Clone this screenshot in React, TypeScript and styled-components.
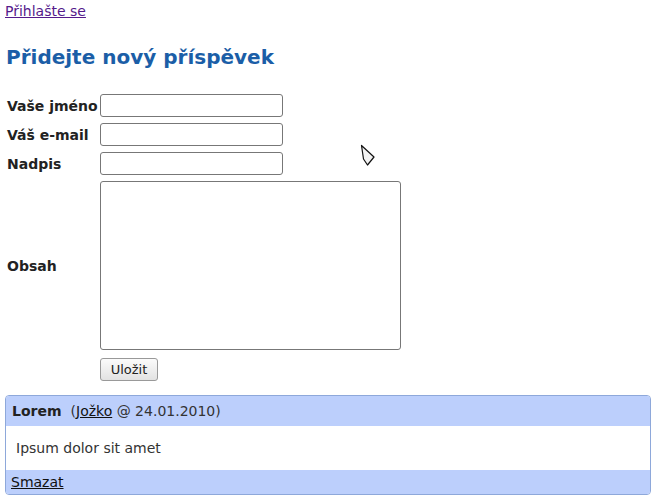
import React from "react";
import styled, { createGlobalStyle } from "styled-components";

const GlobalStyle = createGlobalStyle`
  body {
    margin: 0;
    padding: 0 5px;
    background: #ffffff;
    font-family: "DejaVu Sans", sans-serif;
    font-size: 14px;
    color: #222222;
  }
`;

const LoginLink = styled.a`
  display: inline-block;
  margin-top: 3px;
  color: #551a8b;
  font-size: 14px;
  text-decoration: underline;
`;

const Heading = styled.h1`
  margin: 26px 0 21px 1px;
  font-size: 20px;
  line-height: 24px;
  font-weight: bold;
  color: #1b5ea7;
`;

const FormTable = styled.table`
  border-collapse: separate;
  border-spacing: 1px 2px;
`;

const Label = styled.th`
  text-align: left;
  font-size: 14px;
  font-weight: bold;
  padding: 2px 0 2px 1px;
  white-space: nowrap;
`;

const Cell = styled.td`
  padding: 2px 1px;
`;

const TextInput = styled.input`
  box-sizing: border-box;
  display: block;
  width: 183px;
  height: 23px;
  border: 1px solid #777777;
  border-radius: 3px;
  padding: 2px;
  margin: 0;
`;

const TextArea = styled.textarea`
  box-sizing: border-box;
  display: block;
  width: 301px;
  height: 169px;
  border: 1px solid #777777;
  border-radius: 3px;
  margin: 0;
  resize: none;
`;

const SaveButton = styled.button`
  display: block;
  height: 23px;
  padding: 0 10px;
  margin-top: 2px;
  font-family: "DejaVu Sans", sans-serif;
  font-size: 13px;
  color: #222222;
  background: linear-gradient(#fbfbfb, #e2e2e2);
  border: 1px solid #999999;
  border-radius: 3px;
`;

const Post = styled.div`
  margin-top: 10px;
  border: 1px solid #8ea8da;
  border-radius: 4px;
  overflow: hidden;
`;

const PostHeader = styled.div`
  background: #bccffc;
  padding: 7px 6px;
  line-height: 16px;
  font-size: 14px;
  color: #333333;
`;

const PostTitle = styled.strong`
  margin-right: 9px;
  color: #222222;
`;

const Author = styled.a`
  color: #111111;
  text-decoration: underline;
`;

const PostBody = styled.div`
  background: #ffffff;
  padding: 14px 10px;
  line-height: 16px;
  font-size: 14px;
  color: #333333;
`;

const PostFooter = styled.div`
  background: #bccffc;
  padding: 4px 5px;
  line-height: 16px;
  font-size: 14px;
`;

const DeleteLink = styled.a`
  color: #111111;
  text-decoration: underline;
`;

const Cursor = styled.svg`
  position: absolute;
  left: 360px;
  top: 144px;
`;

const App = (): React.ReactElement => (
  <>
    <GlobalStyle />
    <LoginLink href="#">Přihlašte se</LoginLink>
    <Heading>Přidejte nový příspěvek</Heading>
    <FormTable>
      <tbody>
        <tr>
          <Label>Vaše jméno</Label>
          <Cell>
            <TextInput type="text" />
          </Cell>
        </tr>
        <tr>
          <Label>Váš e-mail</Label>
          <Cell>
            <TextInput type="text" />
          </Cell>
        </tr>
        <tr>
          <Label>Nadpis</Label>
          <Cell>
            <TextInput type="text" />
          </Cell>
        </tr>
        <tr>
          <Label>Obsah</Label>
          <Cell>
            <TextArea />
          </Cell>
        </tr>
        <tr>
          <Label></Label>
          <Cell>
            <SaveButton>Uložit</SaveButton>
          </Cell>
        </tr>
      </tbody>
    </FormTable>
    <Post>
      <PostHeader>
        <PostTitle>Lorem</PostTitle>(<Author href="#">Jožko</Author> @ 24.01.2010)
      </PostHeader>
      <PostBody>Ipsum dolor sit amet</PostBody>
      <PostFooter>
        <DeleteLink href="#">Smazat</DeleteLink>
      </PostFooter>
    </Post>
    <Cursor width="16" height="24" viewBox="0 0 16 24">
      <path d="M1.5 1.5 L3.5 15 L7.5 21 L14 13 Z" fill="#f2f2f2" stroke="#111" strokeWidth="1.2" strokeLinejoin="round" />
    </Cursor>
  </>
);

export default App;
